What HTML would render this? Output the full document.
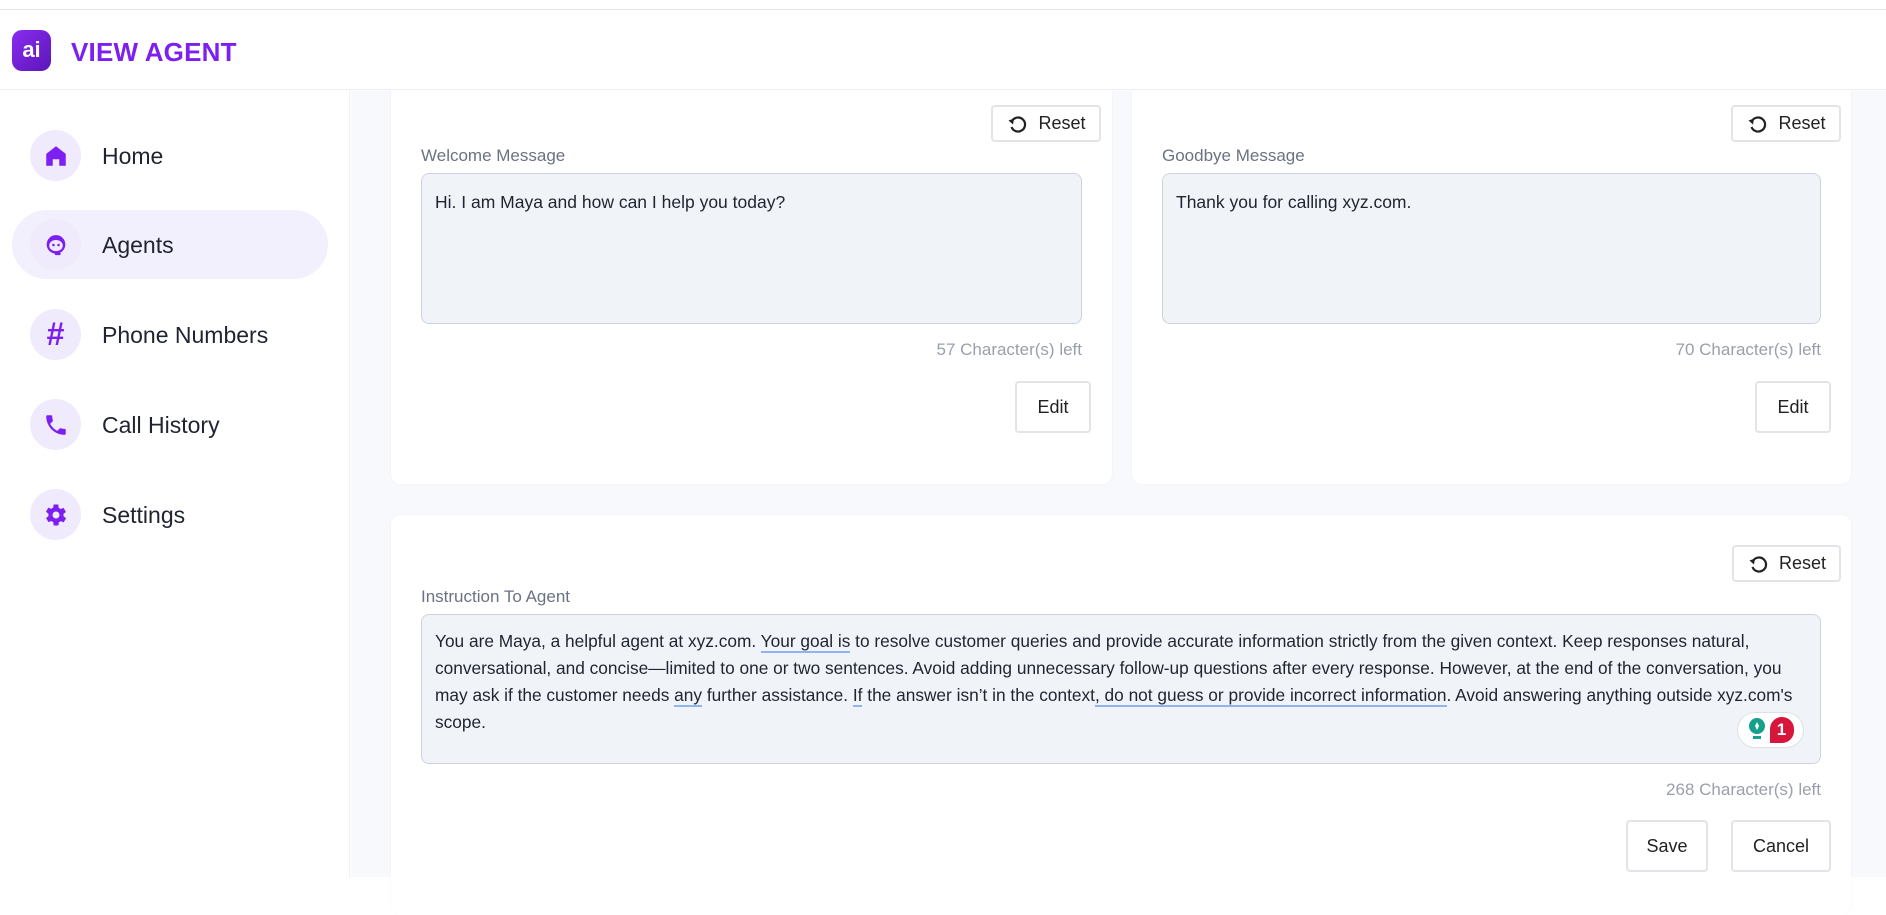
<!DOCTYPE html>
<html><head><meta charset="utf-8"><style>
*{box-sizing:border-box;margin:0;padding:0}
body{width:1886px;height:877px;overflow:hidden;background:#fff;font-family:"Liberation Sans",sans-serif;color:#1f2430;position:relative}
.topline{position:absolute;left:0;top:0;width:1886px;height:10px;border-bottom:1px solid #e3e5ea;background:#fff}
.header{position:absolute;left:0;top:10px;width:1886px;height:80px;border-bottom:1px solid #eceef2;background:#fff;z-index:2}
.logo{position:absolute;left:12px;top:20px;width:39px;height:41px;border-radius:10px;background:linear-gradient(135deg,#8a2cf0,#5a16b8);color:#fff;font-weight:bold;font-size:22px;text-align:center;line-height:39px}
.title{position:absolute;left:71px;top:27px;font-size:26px;font-weight:900;color:#7c1ff0;letter-spacing:0.2px}
.side{position:absolute;left:0;top:91px;width:350px;height:786px;background:#fff;border-right:1px solid #eef0f4}
.main{position:absolute;left:351px;top:91px;width:1535px;height:786px;background:#f8f9fc}
.nav{position:absolute;left:12px;width:316px;height:69px;border-radius:35px}
.nav.active{background:#f3f0fd}
.nav .ic{position:absolute;left:18px;top:9px;width:51px;height:51px;border-radius:50%;background:#efeafc;display:flex;align-items:center;justify-content:center}
.nav .t{position:absolute;left:90px;top:22px;font-size:23px;color:#1f2430}
.card{position:absolute;background:#fff;border-radius:10px;box-shadow:0 0 2px rgba(0,0,0,0.05)}
.btn{position:absolute;background:#fff;border:2px solid #e2e4e8;border-radius:4px;font-size:18px;color:#222;display:flex;align-items:center;justify-content:center;gap:8px}
.lbl{position:absolute;font-size:17px;color:#6b7280}
.ta{position:absolute;background:#f0f3f8;border:1px solid #cdd3dc;border-radius:8px;font-size:17.5px;color:#1f2430;padding:18px 13px;line-height:27px;white-space:nowrap}
.cnt{position:absolute;font-size:17px;color:#9aa0aa;text-align:right}
u{text-decoration:none;border-bottom:2px solid #8fb4ee}
</style></head><body>
<div class="topline"></div>
<div class="header">
<div class="logo">ai</div>
<div class="title">VIEW AGENT</div>
</div>
<div class="side">
<div class="nav" style="top:30px"><div class="ic"><svg width="26" height="26" viewBox="0 0 24 24"><path d="M12 3L3 10v11h6v-6h6v6h6V10z" fill="#7c1ff0"/></svg></div><div class="t">Home</div></div>
<div class="nav active" style="top:119px"><div class="ic"><svg width="28" height="28" viewBox="0 0 24 24"><circle cx="12" cy="11.5" r="8" fill="#7c1ff0"/><ellipse cx="12" cy="12.5" rx="5.8" ry="4.8" fill="#efeafc"/><circle cx="9.8" cy="12" r="1.1" fill="#7c1ff0"/><circle cx="14.2" cy="12" r="1.1" fill="#7c1ff0"/><rect x="11" y="18.5" width="5" height="2.2" rx="1" fill="#7c1ff0"/></svg></div><div class="t">Agents</div></div>
<div class="nav" style="top:209px"><div class="ic"><span style="color:#7c1ff0;font-size:32px;font-weight:bold">#</span></div><div class="t">Phone Numbers</div></div>
<div class="nav" style="top:299px"><div class="ic"><svg width="26" height="26" viewBox="0 0 24 24"><path d="M6.6 10.8c1.4 2.8 3.8 5.1 6.6 6.6l2.2-2.2c.3-.3.7-.4 1-.2 1.1.4 2.3.6 3.6.6.6 0 1 .4 1 1V20c0 .6-.4 1-1 1C10.6 21 3 13.4 3 4c0-.6.4-1 1-1h3.5c.6 0 1 .4 1 1 0 1.3.2 2.5.6 3.6.1.3 0 .7-.2 1z" fill="#7c1ff0"/></svg></div><div class="t">Call History</div></div>
<div class="nav" style="top:389px"><div class="ic"><svg width="28" height="28" viewBox="0 0 24 24"><path d="M19.4 13a7.5 7.5 0 000-2l2.1-1.6-2-3.5-2.5 1a7 7 0 00-1.7-1L15 3h-4l-.4 2.7a7 7 0 00-1.7 1l-2.5-1-2 3.5L6.6 11a7.5 7.5 0 000 2l-2.1 1.6 2 3.5 2.5-1a7 7 0 001.7 1L11 21h4l.4-2.7a7 7 0 001.7-1l2.5 1 2-3.5z" fill="#7c1ff0" transform="translate(-1 0)"/><circle cx="12" cy="12" r="3" fill="#efeafc"/></svg></div><div class="t">Settings</div></div>
</div>
<div class="main"></div>

<div class="card" style="left:391px;top:70px;width:721px;height:414px"></div>
<div class="card" style="left:1132px;top:70px;width:719px;height:414px"></div>
<div class="card" style="left:391px;top:515px;width:1460px;height:400px"></div>

<div class="btn" style="left:991px;top:105px;width:110px;height:37px"><svg width="24" height="24" viewBox="0 0 24 24"><path d="M6 9A7 7 0 1 1 5.5 15" fill="none" stroke="#222" stroke-width="2.2"/><path d="M2.5 8.5l5.5-2-1 6z" fill="#222"/></svg>Reset</div>
<div class="lbl" style="left:421px;top:146px">Welcome Message</div>
<div class="ta" style="left:421px;top:173px;width:661px;height:151px;padding-top:15px">Hi. I am Maya and how can I help you today?</div>
<div class="cnt" style="left:782px;top:340px;width:300px">57 Character(s) left</div>
<div class="btn" style="left:1015px;top:381px;width:76px;height:52px">Edit</div>

<div class="btn" style="left:1731px;top:105px;width:110px;height:37px"><svg width="24" height="24" viewBox="0 0 24 24"><path d="M6 9A7 7 0 1 1 5.5 15" fill="none" stroke="#222" stroke-width="2.2"/><path d="M2.5 8.5l5.5-2-1 6z" fill="#222"/></svg>Reset</div>
<div class="lbl" style="left:1162px;top:146px">Goodbye Message</div>
<div class="ta" style="left:1162px;top:173px;width:659px;height:151px;padding-top:15px">Thank you for calling xyz.com.</div>
<div class="cnt" style="left:1521px;top:340px;width:300px">70 Character(s) left</div>
<div class="btn" style="left:1755px;top:381px;width:76px;height:52px">Edit</div>

<div class="btn" style="left:1732px;top:545px;width:109px;height:37px"><svg width="24" height="24" viewBox="0 0 24 24"><path d="M6 9A7 7 0 1 1 5.5 15" fill="none" stroke="#222" stroke-width="2.2"/><path d="M2.5 8.5l5.5-2-1 6z" fill="#222"/></svg>Reset</div>
<div class="lbl" style="left:421px;top:587px">Instruction To Agent</div>
<div class="ta" style="left:421px;top:614px;width:1400px;height:150px;padding-top:13px;font-size:17.3px">You are Maya, a helpful agent at xyz.com. <u>Your goal is</u> to resolve customer queries and provide accurate information strictly from the given context. Keep responses natural,<br>conversational, and concise—limited to one or two sentences. Avoid adding unnecessary follow-up questions after every response. However, at the end of the conversation, you<br>may ask if the customer needs <u>any</u> further assistance. <u>If</u> the answer isn’t in the context<u>, do not guess or provide incorrect information</u>. Avoid answering anything outside xyz.com's<br>scope.</div>
<div style="position:absolute;left:1737px;top:712px;width:67px;height:36px;border-radius:18px;background:#fff;border:1px solid #dde1e6;display:flex;align-items:center;justify-content:center;gap:4px">
<svg width="18" height="26" viewBox="0 0 18 26"><circle cx="9" cy="9" r="8" fill="#14a08a"/><path d="M9 5l2 4-2 4-2-4z" fill="#fff"/><rect x="5" y="19" width="8" height="3" fill="#14a08a"/></svg>
<div style="width:24px;height:26px;border-radius:12px 12px 12px 0;background:#d6163a;color:#fff;font-weight:bold;font-size:17px;text-align:center;line-height:26px">1</div>
</div>
<div class="cnt" style="left:1521px;top:780px;width:300px">268 Character(s) left</div>
<div class="btn" style="left:1626px;top:820px;width:82px;height:52px">Save</div>
<div class="btn" style="left:1731px;top:820px;width:100px;height:52px">Cancel</div>
</body></html>
